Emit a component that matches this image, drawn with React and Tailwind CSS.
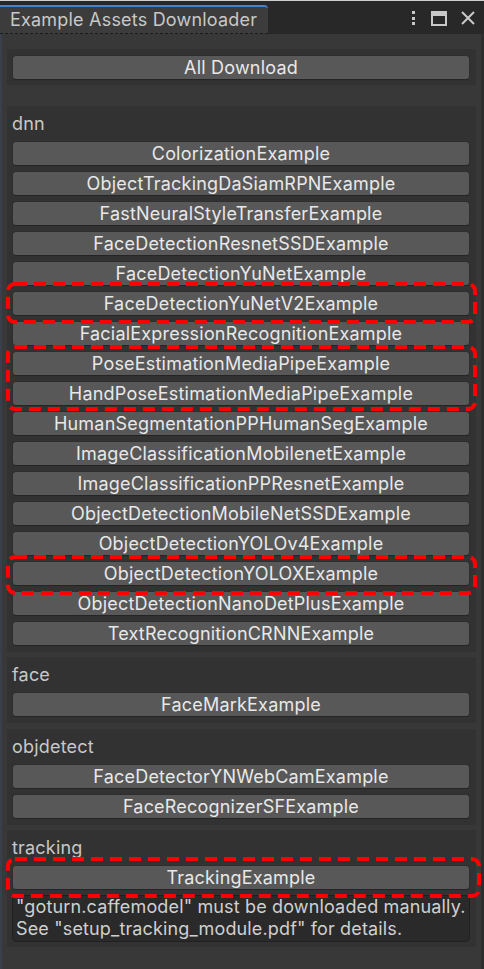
import React from "react";

const FONT = { fontFamily: "Inter, 'Noto Sans', sans-serif" };

function Dashed({ top, bottom, left, right }) {
  return (
    <svg
      className="absolute pointer-events-none"
      style={{ top, bottom, left, right, width: `calc(100% - ${left + right}px)`, height: `calc(100% - ${top + bottom}px)` }}
    >
      <rect
        x="2"
        y="2"
        rx="7"
        ry="7"
        fill="none"
        stroke="#ff0000"
        strokeWidth="4"
        strokeDasharray="12 7"
        style={{ width: "calc(100% - 4px)", height: "calc(100% - 4px)" }}
      />
    </svg>
  );
}

function Btn({ children }) {
  return (
    <div className="h-[25px] w-full flex items-center justify-center bg-[#585858] border border-[#2e2e2e] border-b-[#242424] rounded-[4px] text-[18px] leading-[22px] tracking-[0.2px] text-[#e8e8e8] whitespace-nowrap">
      {children}
    </div>
  );
}

function Marked({ children, top, bottom, left = -6, right = -7 }) {
  return (
    <div className="relative flex flex-col gap-[5px]">
      {children}
      <Dashed top={top} bottom={bottom} left={left} right={right} />
    </div>
  );
}

function Section({ label, children, className = "" }) {
  return (
    <div className={"bg-[#323232] pl-[5px] pr-[6px] pt-[7px] pb-[6px] " + className}>
      <div className="h-[22px] text-[18px] leading-[22px] tracking-[0.2px] text-[#c8c8c8] mb-[6px]">{label}</div>
      <div className="flex flex-col gap-[5px]">{children}</div>
    </div>
  );
}

export default function App() {
  return (
    <div className="w-[484px] h-[969px] bg-[#383838] flex flex-col overflow-hidden" style={FONT}>
      {/* header */}
      <div className="h-[34px] bg-[#282828] border-t border-[#cfcfcf] flex relative shrink-0">
        <div className="mt-[4px] w-[268px] h-[29px] bg-[#3c3c3c] border-t-2 border-[#4683cc] rounded-tr-[4px] flex flex-col">
          <div className="flex-1 pl-[10px] pt-[2px] text-[18px] leading-[22px] tracking-[0.2px] text-[#c8c8c8] whitespace-nowrap">
            Example Assets Downloader
          </div>
          <div className="border-b border-dashed border-[#1c1c1c]" />
        </div>
        <div className="flex-1" />
        <div className="flex items-center gap-[14px] pr-[9px] pt-[1px]">
          <svg width="6" height="16" viewBox="0 0 6 16">
            <rect x="1" y="1" width="3" height="3" fill="#c8c8c8" />
            <rect x="1" y="7" width="3" height="3" fill="#c8c8c8" />
            <rect x="1" y="12" width="3" height="3" fill="#c8c8c8" />
          </svg>
          <svg width="16" height="15" viewBox="0 0 16 15">
            <rect x="1" y="1" width="14" height="13" fill="none" stroke="#c8c8c8" strokeWidth="2" />
            <rect x="1" y="1" width="14" height="4" fill="#c8c8c8" />
          </svg>
          <svg width="14" height="14" viewBox="0 0 14 14">
            <path d="M1 1 L13 13 M13 1 L1 13" stroke="#c8c8c8" strokeWidth="2" />
          </svg>
        </div>
      </div>

      {/* body */}
      <div className="flex-1 flex">
        <div className="w-[2px] bg-[#3a3f4b]" />
        <div className="flex-1 px-[5px] pt-[15px] flex flex-col">
          <div className="bg-[#323232] pl-[5px] pr-[6px] pt-[6px] pb-[5px]">
            <Btn>All Download</Btn>
          </div>

          <Section label="dnn" className="mt-[21px]">
            <Btn>ColorizationExample</Btn>
            <Btn>ObjectTrackingDaSiamRPNExample</Btn>
            <Btn>FastNeuralStyleTransferExample</Btn>
            <Btn>FaceDetectionResnetSSDExample</Btn>
            <Btn>FaceDetectionYuNetExample</Btn>
            <Marked top={-9} bottom={-8}>
              <Btn>FaceDetectionYuNetV2Example</Btn>
            </Marked>
            <Btn>FacialExpressionRecognitionExample</Btn>
            <Marked top={-6} bottom={-5}>
              <Btn>PoseEstimationMediaPipeExample</Btn>
              <Btn>HandPoseEstimationMediaPipeExample</Btn>
            </Marked>
            <Btn>HumanSegmentationPPHumanSegExample</Btn>
            <Btn>ImageClassificationMobilenetExample</Btn>
            <Btn>ImageClassificationPPResnetExample</Btn>
            <Btn>ObjectDetectionMobileNetSSDExample</Btn>
            <Btn>ObjectDetectionYOLOv4Example</Btn>
            <Marked top={-6} bottom={-9}>
              <Btn>ObjectDetectionYOLOXExample</Btn>
            </Marked>
            <Btn>ObjectDetectionNanoDetPlusExample</Btn>
            <Btn>TextRecognitionCRNNExample</Btn>
          </Section>

          <Section label="face" className="mt-[5px]">
            <Btn>FaceMarkExample</Btn>
          </Section>

          <Section label="objdetect" className="mt-[6px]">
            <Btn>FaceDetectorYNWebCamExample</Btn>
            <Btn>FaceRecognizerSFExample</Btn>
          </Section>

          <Section label="tracking" className="mt-[5px] !pb-[5px]">
            <Marked top={-8} bottom={-8} left={-6} right={-11}>
              <Btn>TrackingExample</Btn>
            </Marked>
            <div className="bg-[#2a2a2a] border border-[#202020] rounded-[4px] pl-[3px] pt-[0px] pb-[2px] h-[47px] text-[18px] leading-[22px] tracking-[0.15px] text-[#d0d0d0] whitespace-nowrap overflow-hidden">
              <div>"goturn.caffemodel" must be downloaded manually.</div>
              <div>See "setup_tracking_module.pdf" for details.</div>
            </div>
          </Section>
        </div>
        <div className="w-[3px] bg-[#2d2d2d]" />
      </div>
    </div>
  );
}
